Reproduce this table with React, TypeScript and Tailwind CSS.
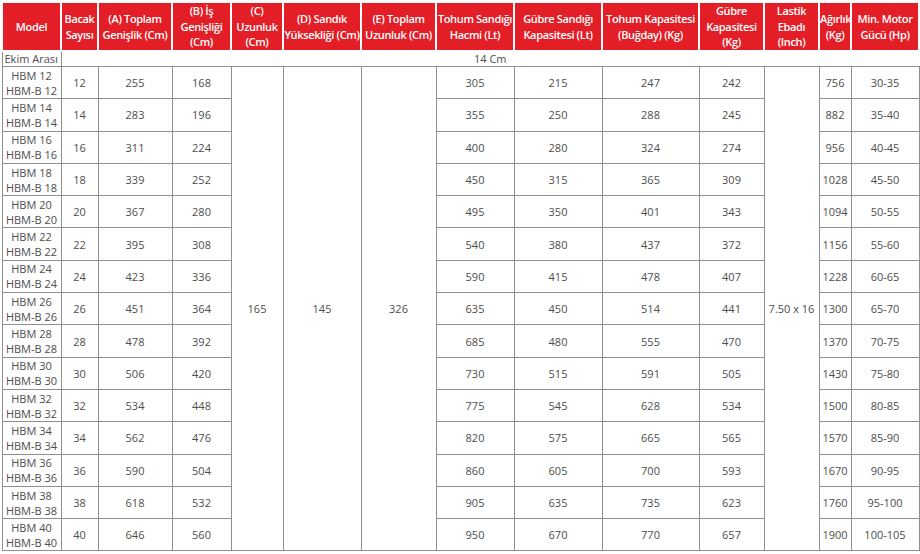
const headers: { lines: string[]; w: number }[] = [
  { lines: ["Model"], w: 59 },
  { lines: ["Bacak", "Sayısı"], w: 37 },
  { lines: ["(A) Toplam", "Genişlik (Cm)"], w: 74 },
  { lines: ["(B) İş", "Genişliği", "(Cm)"], w: 59 },
  { lines: ["(C)", "Uzunluk", "(Cm)"], w: 52 },
  { lines: ["(D) Sandık", "Yüksekliği (Cm)"], w: 78 },
  { lines: ["(E) Toplam", "Uzunluk (Cm)"], w: 75 },
  { lines: ["Tohum Sandığı", "Hacmi (Lt)"], w: 78 },
  { lines: ["Gübre Sandığı", "Kapasitesi (Lt)"], w: 88 },
  { lines: ["Tohum Kapasitesi", "(Buğday) (Kg)"], w: 97 },
  { lines: ["Gübre", "Kapasitesi", "(Kg)"], w: 65 },
  { lines: ["Lastik", "Ebadı", "(Inch)"], w: 55 },
  { lines: ["Ağırlık", "(Kg)"], w: 32 },
  { lines: ["Min. Motor", "Gücü (Hp)"], w: 68 },
];

// bacak, A, B, tohum hacmi, gübre sandığı, tohum kap., gübre kap., ağırlık, motor
const rows: [number, number, number, number, number, number, number, number, string][] = [
  [12, 255, 168, 305, 215, 247, 242, 756, "30-35"],
  [14, 283, 196, 355, 250, 288, 245, 882, "35-40"],
  [16, 311, 224, 400, 280, 324, 274, 956, "40-45"],
  [18, 339, 252, 450, 315, 365, 309, 1028, "45-50"],
  [20, 367, 280, 495, 350, 401, 343, 1094, "50-55"],
  [22, 395, 308, 540, 380, 437, 372, 1156, "55-60"],
  [24, 423, 336, 590, 415, 478, 407, 1228, "60-65"],
  [26, 451, 364, 635, 450, 514, 441, 1300, "65-70"],
  [28, 478, 392, 685, 480, 555, 470, 1370, "70-75"],
  [30, 506, 420, 730, 515, 591, 505, 1430, "75-80"],
  [32, 534, 448, 775, 545, 628, 534, 1500, "80-85"],
  [34, 562, 476, 820, 575, 665, 565, 1570, "85-90"],
  [36, 590, 504, 860, 605, 700, 593, 1670, "90-95"],
  [38, 618, 532, 905, 635, 735, 623, 1760, "95-100"],
  [40, 646, 560, 950, 670, 770, 657, 1900, "100-105"],
];

const td = "border border-[#8f8f8f] px-0 py-0 text-center align-middle";

export default function App() {
  return (
    <div
      className="min-h-screen w-[920px] bg-white pl-[1px] pt-[1px] text-[11px] leading-[15px] text-[#4d4d4d]"
      style={{ fontFamily: '"Open Sans", "Noto Sans", sans-serif' }}
    >
      <table className="w-[917px] table-fixed border-collapse">
        <colgroup>
          {headers.map((h, i) => (
            <col key={i} style={{ width: h.w }} />
          ))}
        </colgroup>
        <thead>
          <tr className="h-[49px]">
            {headers.map((h, i) => (
              <th
                key={i}
                className="border-2 border-white bg-[#e31e26] px-0 text-center align-middle font-semibold leading-[15.5px] tracking-[-0.35px] text-white"
              >
                {h.lines.map((l, j) => (
                  <div key={j} className="whitespace-nowrap">
                    {l}
                  </div>
                ))}
              </th>
            ))}
          </tr>
        </thead>
        <tbody>
          <tr className="h-[15px] leading-[14px]">
            <td className="border border-t-0 border-[#8f8f8f] px-[2px] text-left">Ekim Arası</td>
            <td colSpan={13} className="border-b border-[#8f8f8f] text-center">
              14 Cm
            </td>
          </tr>
          {rows.map((r, i) => (
            <tr key={r[0]} className="h-[32.3px]">
              <td className={td}>
                <div>HBM {r[0]}</div>
                <div>HBM-B {r[0]}</div>
              </td>
              <td className={td}>{r[0]}</td>
              <td className={td}>{r[1]}</td>
              <td className={td}>{r[2]}</td>
              {i === 0 && (
                <>
                  <td rowSpan={15} className={td}>165</td>
                  <td rowSpan={15} className={td}>145</td>
                  <td rowSpan={15} className={td}>326</td>
                </>
              )}
              <td className={td}>{r[3]}</td>
              <td className={td}>{r[4]}</td>
              <td className={td}>{r[5]}</td>
              <td className={td}>{r[6]}</td>
              {i === 0 && (
                <td rowSpan={15} className={td}>
                  7.50 x 16
                </td>
              )}
              <td className={td}>{r[7]}</td>
              <td className={td}>{r[8]}</td>
            </tr>
          ))}
        </tbody>
      </table>
    </div>
  );
}
